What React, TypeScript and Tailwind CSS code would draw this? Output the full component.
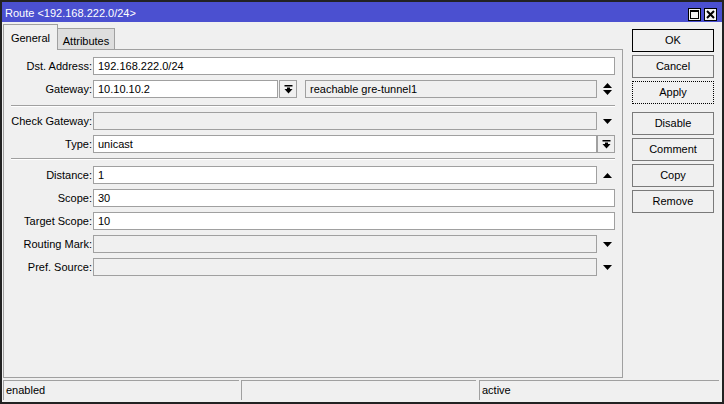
import React from "react";

// small glyphs used by the winbox-style form
function DownIcon() {
  return (
    <svg width="9" height="5" viewBox="0 0 9 5">
      <path d="M0 0H9L4.5 5Z" fill="#000" />
    </svg>
  );
}

function UpIcon() {
  return (
    <svg width="9" height="5" viewBox="0 0 9 5">
      <path d="M0 5H9L4.5 0Z" fill="#000" />
    </svg>
  );
}

function UpDownIcon() {
  return (
    <svg width="9" height="12" viewBox="0 0 9 12">
      <path d="M0 5H9L4.5 0Z" fill="#000" />
      <path d="M0 7H9L4.5 12Z" fill="#000" />
    </svg>
  );
}

function BarDownIcon() {
  return (
    <svg width="9" height="9" viewBox="0 0 9 9">
      <rect x="0.5" y="0" width="8" height="1.5" fill="#000" />
      <rect x="3" y="2.5" width="3" height="1.5" fill="#000" />
      <path d="M0.5 4H8.5L4.5 8.5Z" fill="#000" />
    </svg>
  );
}

function Field({
  value = "",
  disabled = false,
  className = "",
}: {
  value?: string;
  disabled?: boolean;
  className?: string;
}) {
  return (
    <div
      className={`h-[18px] border border-[#a0a0a0] ${
        disabled ? "bg-[#f0f0f0]" : "bg-white"
      } flex items-center pl-[4px] whitespace-nowrap overflow-hidden ${className}`}
    >
      {value}
    </div>
  );
}

function Row({ label, children }: { label: string; children: React.ReactNode }) {
  return (
    <div className="flex h-[18px] items-center">
      <div className="w-[88px] text-right whitespace-nowrap">{label}:</div>
      <div className="ml-[1px] flex h-[18px] w-[522px] items-center">{children}</div>
    </div>
  );
}

function ArrowSlot({ children }: { children: React.ReactNode }) {
  return <div className="flex h-[18px] w-[18px] items-center pl-[6px]">{children}</div>;
}

function IconButton() {
  return (
    <div className="flex h-[18px] w-[18px] items-center justify-center border border-[#a0a0a0] bg-[#f0f0f0]">
      <BarDownIcon />
    </div>
  );
}

function Separator({ top, bottom }: { top: string; bottom: string }) {
  return <div className={`${top} ${bottom} ml-[7px] h-[2px] w-[604px] border-t border-b border-t-[#a0a0a0] border-b-white`} />;
}

function Btn({ label, kind = "normal" }: { label: string; kind?: "normal" | "default" | "focus" }) {
  const border =
    kind === "default"
      ? "border border-black"
      : kind === "focus"
      ? "border border-dotted border-black"
      : "border border-[#7a7a7a]";
  return (
    <div className={`flex h-[23px] w-[82px] items-center justify-center bg-[#f0f0f0] ${border}`}>
      {label}
    </div>
  );
}

export default function App() {
  return (
    <div className="h-[404px] w-[724px] overflow-hidden border-2 border-[#222] bg-[#f0f0f0] font-['Liberation_Sans',Arial,sans-serif] text-[11px] leading-none text-black">
      {/* title bar */}
      <div className="flex h-[20px] items-center justify-between bg-[#4b50d0] pl-[3px] pr-[5px]">
        <span className="pt-[3px] text-white">Route &lt;192.168.222.0/24&gt;</span>
        <div className="flex gap-[3px] pt-[4px]">
          <div className="flex h-[13px] w-[13px] items-center justify-center border border-black bg-[#f4f4f4]">
            <svg width="9" height="9" viewBox="0 0 9 9">
              <rect x="0.5" y="0.5" width="8" height="8" fill="none" stroke="#000" strokeWidth="1" />
              <rect x="0" y="0" width="9" height="2" fill="#000" />
            </svg>
          </div>
          <div className="flex h-[13px] w-[13px] items-center justify-center border border-black bg-[#f4f4f4]">
            <svg width="9" height="9" viewBox="0 0 9 9">
              <path d="M1 1L8 8M8 1L1 8" stroke="#000" strokeWidth="2" />
            </svg>
          </div>
        </div>
      </div>

      {/* body */}
      <div className="flex h-[356px]">
        <div className="ml-[1px] flex w-[620px] flex-col pt-[2px]">
          {/* tabs */}
          <div className="flex h-[25px] items-start">
            <div className="relative z-10 flex h-[26px] w-[55px] items-start justify-center border border-b-0 border-[#a0a0a0] bg-[#f0f0f0] pt-[8px]">
              General
            </div>
            <div className="mt-[4px] flex h-[21px] w-[57px] items-start justify-center border border-l-0 border-b-0 border-[#a0a0a0] bg-[#dedede] pt-[7px]">
              Attributes
            </div>
          </div>
          {/* panel */}
          <div className="h-[329px] border border-[#a0a0a0] bg-[#f0f0f0] pt-[7px]">
            <div className="flex flex-col gap-[5px]">
              <Row label="Dst. Address">
                <Field value="192.168.222.0/24" className="w-[522px]" />
              </Row>
              <Row label="Gateway">
                <Field value="10.10.10.2" className="w-[185px]" />
                <div className="ml-[1px]">
                  <IconButton />
                </div>
                <Field value="reachable gre-tunnel1" disabled className="ml-[8px] w-[292px]" />
                <ArrowSlot>
                  <UpDownIcon />
                </ArrowSlot>
              </Row>
            </div>

            <Separator top="mt-[7px]" bottom="mb-[5px]" />

            <div className="flex flex-col gap-[5px]">
              <Row label="Check Gateway">
                <Field disabled className="w-[504px]" />
                <ArrowSlot>
                  <DownIcon />
                </ArrowSlot>
              </Row>
              <Row label="Type">
                <Field value="unicast" className="w-[504px]" />
                <IconButton />
              </Row>
            </div>

            <Separator top="mt-[5px]" bottom="mb-[6px]" />

            <div className="flex flex-col gap-[5px]">
              <Row label="Distance">
                <Field value="1" className="w-[504px]" />
                <ArrowSlot>
                  <UpIcon />
                </ArrowSlot>
              </Row>
              <Row label="Scope">
                <Field value="30" className="w-[522px]" />
              </Row>
              <Row label="Target Scope">
                <Field value="10" className="w-[522px]" />
              </Row>
              <Row label="Routing Mark">
                <Field disabled className="w-[504px]" />
                <ArrowSlot>
                  <DownIcon />
                </ArrowSlot>
              </Row>
              <Row label="Pref. Source">
                <Field disabled className="w-[504px]" />
                <ArrowSlot>
                  <DownIcon />
                </ArrowSlot>
              </Row>
            </div>
          </div>
        </div>

        {/* buttons */}
        <div className="ml-[9px] flex w-[82px] flex-col pt-[7px]">
          <div className="flex flex-col gap-[3px]">
            <Btn label="OK" kind="default" />
            <Btn label="Cancel" />
            <Btn label="Apply" kind="focus" />
          </div>
          <div className="mt-[8px] flex flex-col gap-[3px]">
            <Btn label="Disable" />
            <Btn label="Comment" />
            <Btn label="Copy" />
            <Btn label="Remove" />
          </div>
        </div>
      </div>

      {/* status bar */}
      <div className="mt-[2px] flex h-[20px]">
        <div className="ml-[1px] flex w-[236px] items-center border-t border-l border-[#a0a0a0] pl-[2px]">enabled</div>
        <div className="ml-[2px] w-[235px] border-t border-l border-[#a0a0a0]" />
        <div className="ml-[3px] flex w-[240px] items-center border-t border-l border-[#a0a0a0] pl-[2px]">active</div>
      </div>
    </div>
  );
}
